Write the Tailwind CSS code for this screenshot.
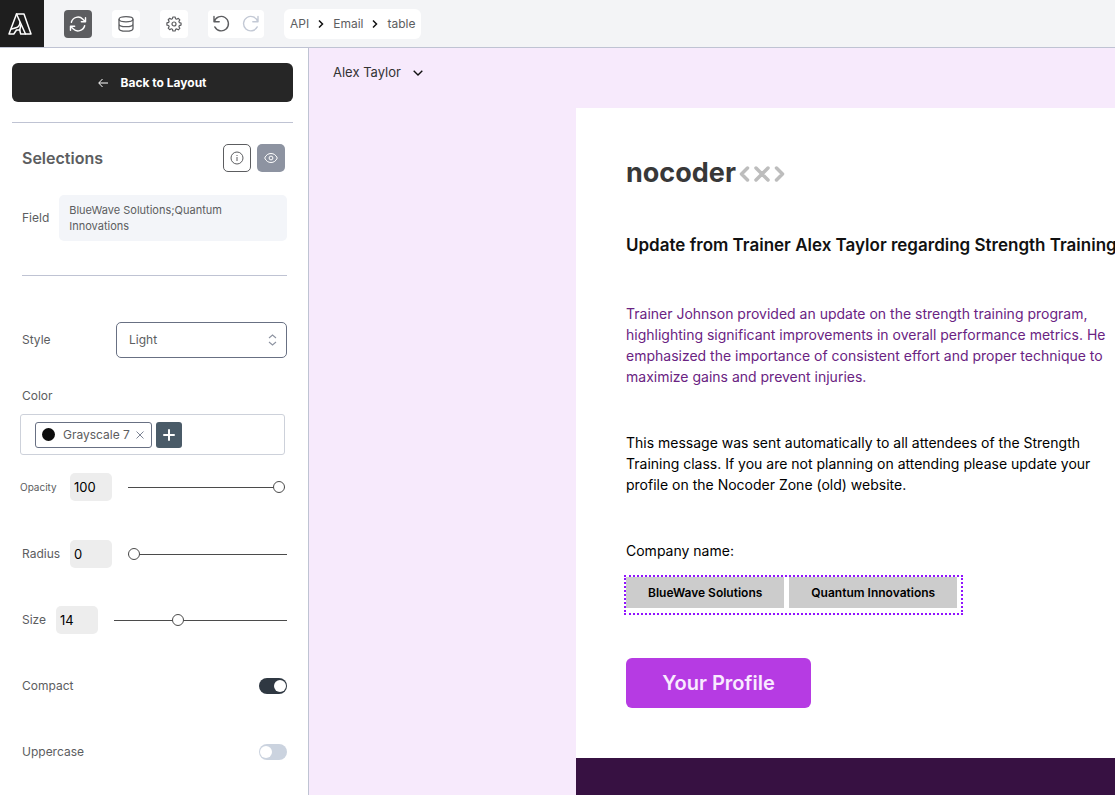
<!DOCTYPE html>
<html lang="en">
<head>
    <meta charset="UTF-8">
    <title>Email template editor</title>
    <meta name="viewport" content="width=device-width, initial-scale=1.0">
    <script src="https://cdn.jsdelivr.net/npm/@tailwindcss/browser@4"></script>
</head>
<body class="h-screen flex flex-col overflow-hidden bg-white font-['Inter',sans-serif] text-[12px] text-[#5c5d60]">
    <!-- Top bar -->
    <header class="flex items-center shrink-0 h-12 bg-[#f3f4f6] border-b border-[#bfc3d3]">
        <a href="#" aria-label="Home" class="flex items-center justify-center w-11 h-full pr-1 bg-[#1e1e1e] text-white">
            <svg class="w-6 h-6" viewBox="0 0 24 24" fill="none" stroke="currentColor" stroke-width="1.5" stroke-linejoin="round" stroke-linecap="round">
                <path d="M8.500 2h7.500l7 20h-5.500z"/>
                <path d="M8.500 2 1 22h4.800l2.700-4h3.200l1 4h4.800"/>
                <path d="M12 10.500c-.3 3-1.500 4.700-4 5.300l-4.300 1.200M13 13l-1.300 5"/>
            </svg>
        </a>
        <nav class="flex items-center ml-5" aria-label="Tools">
            <button type="button" aria-label="Refresh" class="flex items-center justify-center size-7 rounded-sm bg-[#5c5d60] text-white">
                <svg class="w-5 h-5" viewBox="0 0 24 24" fill="none" stroke="currentColor" stroke-width="1.7" stroke-linecap="round" stroke-linejoin="round">
                    <path d="M16.023 9.348h4.992V4.356M2.985 19.644v-4.992h4.992M2.985 14.652l3.181 3.183a8.25 8.25 0 0 0 13.803-3.7M4.031 9.865a8.25 8.25 0 0 1 13.803-3.7l3.181 3.182"/>
                </svg>
            </button>
            <button type="button" aria-label="Data" class="flex items-center justify-center size-7 ml-5 rounded-sm bg-white">
                <svg class="w-4 h-4" viewBox="0 0 16 16" fill="none" stroke="currentColor" stroke-width="1.300">
                    <ellipse cx="8" cy="3.300" rx="7" ry="2.600"/>
                    <path d="M1 3.300v9.200c0 1.500 3.100 2.700 7 2.700s7-1.200 7-2.700V3.300M1 7.900c0 1.500 3.100 2.700 7 2.700s7-1.200 7-2.700"/>
                </svg>
            </button>
            <button type="button" aria-label="Settings" class="flex items-center justify-center size-7 ml-5 rounded-sm bg-white">
                <svg class="w-4 h-4" viewBox="0 0 16 16" fill="none" stroke="currentColor" stroke-width="1.200" stroke-linejoin="round">
                    <path d="M6.900 1h2.200l.5 1.800 1.100.450 1.600-.9 1.500 1.500-.9 1.600.450 1.100 1.700.450v2.100l-1.700.5-.450 1.100.9 1.600-1.500 1.500-1.600-.9-1.100.450L9.100 15H6.900l-.5-1.750-1.100-.450-1.600.9-1.500-1.500.9-1.600-.450-1.100L.9 9.100V6.900l1.750-.450.450-1.100-.9-1.600 1.500-1.500 1.600.9 1.100-.450z"/>
                    <circle cx="8" cy="8" r="2"/>
                </svg>
            </button>
            <div class="flex items-center ml-5 rounded-sm bg-white">
                <button type="button" aria-label="Undo" class="flex items-center justify-center size-7">
                    <svg class="w-5 h-5" viewBox="0 0 20 20" fill="none" stroke="currentColor" stroke-width="1.400" stroke-linecap="round" stroke-linejoin="round">
                        <path d="M2 2.500v5.200h5.200M2.300 7.700a7.200 7.200 0 1 1 .5 5.200"/>
                    </svg>
                </button>
                <button type="button" aria-label="Redo" class="flex items-center justify-center size-7 text-[#c3c9d5]">
                    <svg class="w-5 h-5" viewBox="0 0 20 20" fill="none" stroke="currentColor" stroke-width="1.400" stroke-linecap="round" stroke-linejoin="round">
                        <path d="M18 2.500v5.200h-5.200M17.700 7.700a7.200 7.200 0 1 0-.5 5.200"/>
                    </svg>
                </button>
            </div>
        </nav>
        <nav class="flex items-center gap-2 h-[30px] ml-5 px-[6px] rounded-md bg-white" aria-label="Breadcrumb">
            <a href="#">API</a>
            <svg class="w-2 h-2" viewBox="0 0 8 8" fill="none" stroke="#111" stroke-width="1.500"><path d="M2 .5 5.500 4 2 7.500"/></svg>
            <a href="#">Email</a>
            <svg class="w-2 h-2" viewBox="0 0 8 8" fill="none" stroke="#111" stroke-width="1.500"><path d="M2 .5 5.500 4 2 7.500"/></svg>
            <a href="#">table</a>
        </nav>
    </header>

    <div class="flex flex-1 min-h-0">
        <!-- Settings panel -->
        <aside class="w-[309px] shrink-0 overflow-hidden pt-[15px] pl-3 pr-[15px] border-r border-[#bfc3d3]">
            <button type="button" class="flex items-center justify-center gap-3 w-full h-[39px] rounded-md bg-[#262626] text-white font-bold">
                <svg class="w-[10px] h-[10px]" viewBox="0 0 10 10" fill="none" stroke="currentColor" stroke-width="1"><path d="M10 5H1M4.500 1 .7 5l3.800 4"/></svg>
                Back to Layout
            </button>
            <hr class="mt-5 border-[#bfc3d3]">

            <section class="pl-[10px] pr-[6px]">
                <div class="flex items-center mt-[21px] gap-[6px] pr-[2px]">
                    <h2 class="flex-1 text-[16px] font-semibold">Selections</h2>
                    <button type="button" aria-label="Info" class="flex items-center justify-center size-7 rounded-[5px] border border-[#5c5d60]">
                        <svg class="w-[14px] h-[14px]" viewBox="0 0 14 14" fill="none" stroke="currentColor"><circle cx="7" cy="7" r="6"/><path d="M7 6v4M7 4v1"/></svg>
                    </button>
                    <button type="button" aria-label="Preview" class="flex items-center justify-center size-7 rounded-[5px] bg-[#8d93a1] text-white">
                        <svg class="w-[14px] h-[14px]" viewBox="0 0 14 14" fill="none" stroke="currentColor"><path d="M.7 7C2 4 4.200 2.500 7 2.500S12 4 13.300 7C12 10 9.800 11.500 7 11.500S2 10 .7 7z"/><circle cx="7" cy="7" r="1.900"/></svg>
                    </button>
                </div>

                <div class="flex items-center gap-[10px] mt-[23px]">
                    <span>Field</span>
                    <p class="flex-1 px-[10px] py-[7px] rounded-[5px] bg-[#f3f5f9] text-[11px] leading-4">BlueWave Solutions;Quantum<br>Innovations</p>
                </div>
                <hr class="mt-[34px] border-[#bfc3d3]">

                <div class="flex items-center justify-between mt-[46px]">
                    <label for="style">Style</label>
                    <div class="relative">
                        <select id="style" class="w-[171px] h-9 px-3 rounded-[5px] border border-[#687083] bg-white appearance-none">
                            <option>Light</option>
                            <option>Dark</option>
                        </select>
                        <svg class="absolute right-[10px] top-3 w-[9px] h-3 pointer-events-none" viewBox="0 0 9 12" fill="none" stroke="#8d93a1" stroke-width="1.100"><path d="M1 4 4.500 1 8 4M1 8l3.500 3L8 8"/></svg>
                    </div>
                </div>

                <h3 class="mt-7 leading-5">Color</h3>
            </section>

            <section class="pl-2 pr-2">
                <div class="flex items-center gap-1 h-[41px] mt-2 px-[14px] rounded-[3px] border border-[#cdd1da]">
                    <span class="flex items-center h-[26px] pl-[6px] pr-[7px] rounded-[3px] border border-[#687083]">
                        <span class="size-[13px] rounded-full bg-[#0d0d0d] mr-2"></span>
                        Grayscale 7
                        <button type="button" aria-label="Remove Grayscale 7" class="ml-[6px]">
                            <svg class="w-2 h-2" viewBox="0 0 8 8" fill="none" stroke="#7d8494"><path d="M.5.5l7 7M7.500.5l-7 7"/></svg>
                        </button>
                    </span>
                    <button type="button" aria-label="Add color" class="flex items-center justify-center size-[26px] rounded-[3px] bg-[#4a5b68] text-white">
                        <svg class="w-3 h-3" viewBox="0 0 12 12" fill="none" stroke="currentColor" stroke-width="2" stroke-linecap="round"><path d="M6 1v10M1 6h10"/></svg>
                    </button>
                </div>
                <div class="flex items-center mt-[18px]">
                    <label for="opacity" class="w-[50px] text-[10px]">Opacity</label>
                    <input type="text" id="opacity" value="100" class="w-[42px] h-7 px-1 rounded-[5px] bg-[#ededed] text-[13px] text-black">
                    <input type="range" aria-label="Opacity" value="100" class="flex-1 min-w-0 h-3 ml-4 appearance-none bg-transparent [&::-webkit-slider-runnable-track]:h-px [&::-webkit-slider-runnable-track]:bg-[#4b4b4b] [&::-webkit-slider-thumb]:appearance-none [&::-webkit-slider-thumb]:size-3 [&::-webkit-slider-thumb]:-mt-[6px] [&::-webkit-slider-thumb]:rounded-full [&::-webkit-slider-thumb]:border [&::-webkit-slider-thumb]:border-solid [&::-webkit-slider-thumb]:border-[#4b4b4b] [&::-webkit-slider-thumb]:bg-white">
                </div>
            </section>

            <section class="pl-[10px] pr-[6px]">
                <div class="flex items-center mt-[39px]">
                    <label for="radius" class="w-12">Radius</label>
                    <input type="text" id="radius" value="0" class="w-[42px] h-7 px-1 rounded-[5px] bg-[#ededed] text-[13px] text-black">
                    <input type="range" aria-label="Radius" value="0" class="flex-1 min-w-0 h-3 ml-4 appearance-none bg-transparent [&::-webkit-slider-runnable-track]:h-px [&::-webkit-slider-runnable-track]:bg-[#4b4b4b] [&::-webkit-slider-thumb]:appearance-none [&::-webkit-slider-thumb]:size-3 [&::-webkit-slider-thumb]:-mt-[6px] [&::-webkit-slider-thumb]:rounded-full [&::-webkit-slider-thumb]:border [&::-webkit-slider-thumb]:border-solid [&::-webkit-slider-thumb]:border-[#4b4b4b] [&::-webkit-slider-thumb]:bg-white">
                </div>
                <div class="flex items-center mt-[38px]">
                    <label for="size" class="w-[34px]">Size</label>
                    <input type="text" id="size" value="14" class="w-[42px] h-7 px-1 rounded-[5px] bg-[#ededed] text-[13px] text-black">
                    <input type="range" aria-label="Size" min="5" max="30" value="14" class="flex-1 min-w-0 h-3 ml-4 appearance-none bg-transparent [&::-webkit-slider-runnable-track]:h-px [&::-webkit-slider-runnable-track]:bg-[#4b4b4b] [&::-webkit-slider-thumb]:appearance-none [&::-webkit-slider-thumb]:size-3 [&::-webkit-slider-thumb]:-mt-[6px] [&::-webkit-slider-thumb]:rounded-full [&::-webkit-slider-thumb]:border [&::-webkit-slider-thumb]:border-solid [&::-webkit-slider-thumb]:border-[#4b4b4b] [&::-webkit-slider-thumb]:bg-white">
                </div>
                <div class="flex items-center justify-between h-7 mt-[38px]">
                    <label for="compact">Compact</label>
                    <input type="checkbox" id="compact" checked class="appearance-none flex items-center w-7 h-4 px-px rounded-full bg-[#cbd3df] checked:bg-[#2f3842] checked:justify-end before:size-3 before:rounded-full before:bg-white">
                </div>
                <div class="flex items-center justify-between h-7 mt-[38px]">
                    <label for="uppercase">Uppercase</label>
                    <input type="checkbox" id="uppercase" class="appearance-none flex items-center w-7 h-4 px-px rounded-full bg-[#cbd3df] checked:bg-[#2f3842] checked:justify-end before:size-3 before:rounded-full before:bg-white">
                </div>
            </section>
        </aside>

        <!-- Email preview -->
        <main class="flex-1 min-w-0 overflow-hidden bg-[#f7eafc]">
            <button type="button" class="flex items-center gap-3 h-5 mt-[15px] ml-6 text-[13px] text-[#333]">
                Alex Taylor
                <svg class="w-[10px] h-[6px]" viewBox="0 0 10 6" fill="none" stroke="#111" stroke-width="1.400"><path d="M.7.7 5 5 9.300.7"/></svg>
            </button>

            <article class="w-[600px] mt-[25px] ml-[267px] bg-white text-[14px] leading-[21px] text-black">
                <div class="p-[50px]">
                    <div class="flex items-center gap-[3px] h-7 text-[27px] font-bold text-[#383838]">
                        nocoder
                        <svg class="w-[46px] h-4 mt-1" viewBox="0 0 46 16" fill="none" stroke="#bdbdbd" stroke-width="3.500" stroke-linecap="round" stroke-linejoin="round">
                            <path d="M8.500 2 2.500 8l6 6M17 2l12 12M29 2 17 14M37.500 2l6 6-6 6"/>
                        </svg>
                    </div>
                    <h1 class="mt-[49px] text-[17px] font-semibold whitespace-nowrap text-[#111]">Update from Trainer Alex Taylor regarding Strength Training</h1>
                    <p class="mt-[47px] text-[#6a2382]">Trainer Johnson provided an update on the strength training program, highlighting significant improvements in overall performance metrics. He emphasized the importance of consistent effort and proper technique to maximize gains and prevent injuries.</p>
                    <p class="mt-[45px]">This message was sent automatically to all attendees of the Strength Training class. If you are not planning on attending please update your profile on the Nocoder Zone (old) website.</p>
                    <p class="mt-[45px]">Company name:</p>
                    <div class="flex items-start gap-[5px] w-fit h-10 mt-[14px] -ml-[2px] pr-1 border-2 border-dotted border-[#9013fe] text-[12px] font-semibold">
                        <span class="px-[22px] py-[5px] bg-[#ccc]">BlueWave Solutions</span>
                        <span class="px-[22px] py-[5px] bg-[#ccc]">Quantum Innovations</span>
                    </div>
                    <a href="#" class="flex items-center justify-center w-[185px] h-[50px] mt-[43px] rounded-md bg-[#b63be3] text-[#f9ebff] text-[20px] font-semibold">Your Profile</a>
                </div>
                <footer class="h-40 bg-[#371142]"></footer>
            </article>
        </main>
    </div>
</body>
</html>
